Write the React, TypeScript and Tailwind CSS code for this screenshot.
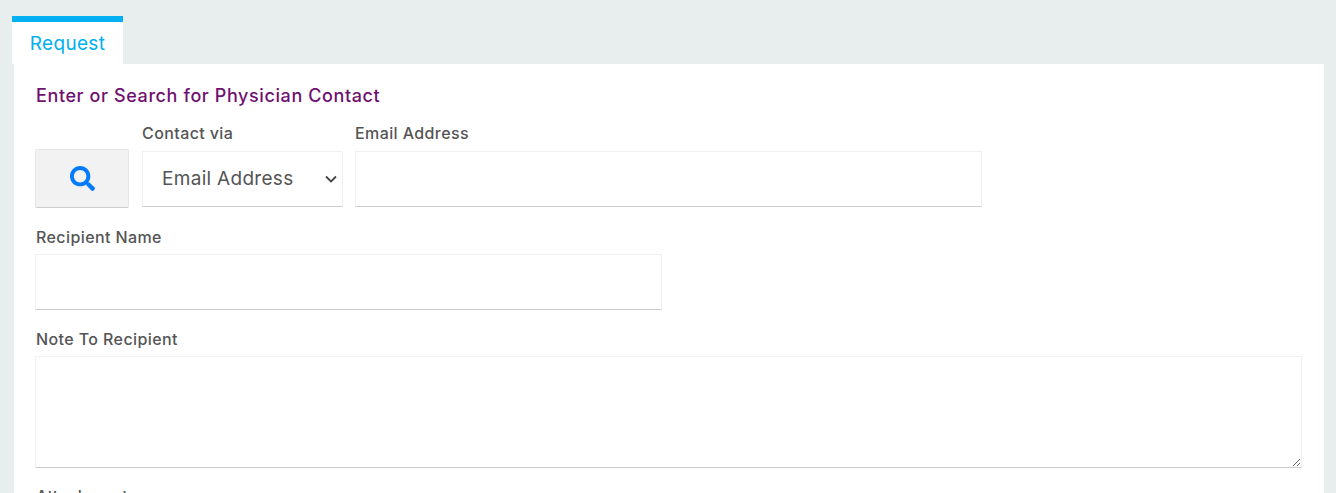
import { FaSearch } from "react-icons/fa";

const labelClass = "block h-5 text-[16px] leading-5 font-medium tracking-[0.4px] text-[#555]";
const fieldClass =
  "block h-14 w-full rounded-none border border-[#f0f0f0] border-b-[#ccc] bg-white outline-none";

function Field({ label, className, gap }: { label: string; className: string; gap: string }) {
  return (
    <div className={className}>
      <label className={labelClass}>{label}</label>
      <input type="text" className={`${fieldClass} ${gap}`} />
    </div>
  );
}

export default function App() {
  return (
    <div className="h-[493px] overflow-hidden bg-[#e8eeee] pt-4 font-['Inter','Liberation_Sans',sans-serif]">
      <div className="ml-3 flex h-12 w-[111px] items-center justify-center border-t-[6px] border-[#00b0f0] bg-white pt-0.5 text-[19px] tracking-[0.3px] text-[#00b0f0]">
        Request
      </div>
      <div className="mr-3 ml-[14px] h-[600px] bg-white px-[21px] pt-[21px]">
        <h2 className="h-[22px] pl-px text-[18px] leading-[22px] font-medium tracking-[0.6px] text-[#701070]">
          Enter or Search for Physician Contact
        </h2>

        <div className="mt-4 flex items-end">
          <button
            type="button"
            className="mb-[-1px] flex h-[59px] w-[94px] items-center justify-center rounded-[2px] border border-[#e6e6e6] border-b-[#ccc] bg-[#f2f2f2]"
          >
            <FaSearch className="h-[25px] w-[25px] text-[#007bff]" />
          </button>
          <div className="ml-[13px] w-[201px]">
            <label className={labelClass}>Contact via</label>
            <div className="relative mt-2">
              <select className={`${fieldClass} appearance-none pl-[19px] text-[19px] tracking-[0.3px] text-[#555]`}>
                <option>Email Address</option>
              </select>
              <svg
                className="pointer-events-none absolute top-[24px] right-[6px] h-2 w-3"
                viewBox="0 0 12 8"
                fill="none"
                stroke="#444"
                strokeWidth="1.8"
              >
                <path d="M1 1.5l5 5 5-5" />
              </svg>
            </div>
          </div>
          <Field label="Email Address" className="ml-3 w-[627px]" gap="mt-2" />
        </div>

        <Field label="Recipient Name" className="mt-5 w-[627px] [&>label]:pl-px" gap="mt-[7px]" />

        <div className="mt-[19px]">
          <label className={`${labelClass} pl-px`}>Note To Recipient</label>
          <textarea className="mt-[7px] block h-[112px] w-[1267px] rounded-none border border-[#f0f0f0] border-b-[#ccc] bg-white outline-none" />
        </div>

        <div className={`mt-[18px] pl-px ${labelClass}`}>Attachments</div>
      </div>
    </div>
  );
}
